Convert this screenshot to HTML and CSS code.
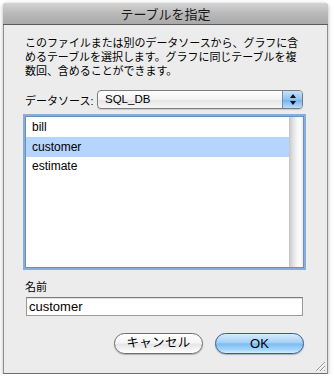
FILE: index.html
```html
<!DOCTYPE html>
<html lang="ja">
<head>
<meta charset="utf-8">
<title>テーブルを指定</title>
<link rel="stylesheet" href="styles.css">
</head>
<body>
<div class="window">
  <div class="titlebar">テーブルを指定</div>
  <div class="content">
    <p class="desc">このファイルまたは別のデータソースから、グラフに含めるテーブルを選択します。グラフに同じテーブルを複数回、含めることができます。</p>
    <div class="source-row">
      <span class="label">データソース:</span>
      <div class="popup">
        <span class="popup-value">SQL_DB</span>
        <span class="popup-arrows"><span class="up"></span><span class="down"></span></span>
      </div>
    </div>
    <div class="listbox">
      <div class="rows">
        <div class="row">bill</div>
        <div class="row selected">customer</div>
        <div class="row">estimate</div>
      </div>
      <div class="scrolltrack"></div>
    </div>
    <div class="name-label">名前</div>
    <div class="field">customer</div>
    <div class="buttons">
      <button class="btn cancel">キャンセル</button>
      <button class="btn ok">OK</button>
    </div>
  </div>
  <svg class="grip" width="12" height="12" viewBox="0 0 12 12">
    <path d="M11 2 L2 11 M11 6 L6 11 M11 10 L10 11" stroke="#9a9a9a" stroke-width="1"/>
    <path d="M11 3 L3 11 M11 7 L7 11" stroke="#ffffff" stroke-width="1"/>
  </svg>
</div>
</body>
</html>
```
FILE: styles.css
```css
html, body {
  margin: 0;
  padding: 0;
  background: #ffffff;
}
body {
  padding: 3px 0 0 3px;
  font-family: "Liberation Sans", "Noto Sans CJK JP", sans-serif;
  color: #000;
}
.window {
  position: relative;
  width: 325px;
  height: 371px;
  box-sizing: border-box;
  background: #ececec;
  border: 1px solid #8e8e8e;
  border-top: none;
  border-bottom-color: #6e6e6e;
  border-radius: 4px 4px 0 0;
  box-shadow: 0 1px 4px rgba(0,0,0,0.3);
  display: flex;
  flex-direction: column;
}
.titlebar {
  height: 22px;
  box-sizing: border-box;
  border-bottom: 1px solid #5a5a5a;
  border-radius: 4px 4px 0 0;
  background: linear-gradient(#d3d3d3, #b9b9b9 50%, #a9a9a9);
  margin: 0 -1px;
  font-family: "Noto Sans CJK JP", sans-serif;
  font-size: 13px;
  line-height: 21px;
  text-align: center;
  color: #1a1a1a;
}
.content {
  display: flex;
  flex-direction: column;
  padding: 10px 22px 0 18px;
}
.desc {
  margin: 0 0 0 3px;
  font-family: "Noto Sans CJK JP", sans-serif;
  font-size: 11px;
  line-height: 14px;
  letter-spacing: -0.05px;
}
.source-row {
  display: flex;
  align-items: center;
  margin-top: 13px;
  padding-left: 3px;
}
.label {
  font-family: "Liberation Sans", "Noto Sans CJK JP", sans-serif;
  font-size: 11px;
  width: 72px;
}
.popup {
  display: flex;
  width: 206px;
  height: 19px;
  box-sizing: border-box;
  border: 1px solid #7d7d7d;
  border-radius: 4px;
  background: linear-gradient(#ffffff, #f2f2f2 50%, #e4e4e4 51%, #f6f6f6);
  overflow: hidden;
  box-shadow: 0 1px 1px rgba(0,0,0,0.15);
}
.popup-value {
  flex: 1;
  font-size: 11.5px;
  line-height: 17px;
  padding-left: 7px;
}
.popup-arrows {
  width: 19px;
  border-left: 1px solid #6f8db6;
  background: linear-gradient(#c7e1f8, #8ec3ef 50%, #6eb0ea 51%, #b9defc);
  display: flex;
  flex-direction: column;
  align-items: center;
  justify-content: center;
  gap: 3px;
}
.up, .down {
  width: 0;
  height: 0;
  border-left: 3px solid transparent;
  border-right: 3px solid transparent;
}
.up { border-bottom: 4px solid #111; }
.down { border-top: 4px solid #111; }
.listbox {
  margin-top: 7px;
  margin-left: 3px;
  height: 152px;
  box-sizing: border-box;
  border: 1px solid #6f8fb8;
  box-shadow: 0 0 0 2px #86aedb;
  background: #fff;
  display: flex;
  margin-right: 1px;
}
.rows {
  flex: 1;
  padding-top: 1px;
}
.row {
  height: 19px;
  line-height: 19px;
  font-size: 12px;
  padding-left: 6px;
}
.row.selected {
  background: #b5d5ff;
  height: 20px;
  line-height: 20px;
}
.scrolltrack {
  width: 14px;
  background: linear-gradient(to right, #c4c4c4, #dedede 25%, #f7f7f7 60%, #fdfdfd 80%, #e9e9e9);
}
.name-label {
  margin-top: 11px;
  padding-left: 3px;
  font-family: "Noto Sans CJK JP", sans-serif;
  font-size: 11px;
  line-height: 14px;
}
.field {
  margin: 4px 2px 0 4px;
  height: 19px;
  box-sizing: border-box;
  border: 1px solid #9a9a9a;
  border-top-color: #7a7a7a;
  background: #fff;
  font-size: 13px;
  line-height: 17px;
  padding-left: 2px;
  box-shadow: inset 0 1px 1px rgba(0,0,0,0.12);
}
.buttons {
  display: flex;
  justify-content: flex-end;
  gap: 12px;
  margin-top: 17px;
  padding-right: 1px;
}
.btn {
  width: 89px;
  height: 21px;
  margin: 0;
  padding: 0;
  border-radius: 11px;
  font-size: 13px;
  line-height: 19px;
  font-family: "Liberation Sans", "Noto Sans CJK JP", sans-serif;
  color: #000;
  box-shadow: 0 1px 1px rgba(0,0,0,0.25);
}
.cancel {
  border: 1px solid #6e6e6e;
  background: linear-gradient(#ffffff, #f6f6f6 45%, #e6e6e6 55%, #f7f7f7 85%, #ffffff);
  font-size: 12.5px;
  letter-spacing: 0.3px;
}
.ok {
  border: 1px solid #3c5a8a;
  background: linear-gradient(#d5ebfd, #a5d1f6 45%, #7dbcf2 52%, #a9d8fc 85%, #d5f0ff);
}
.grip {
  position: absolute;
  right: 1px;
  bottom: 1px;
}
```
